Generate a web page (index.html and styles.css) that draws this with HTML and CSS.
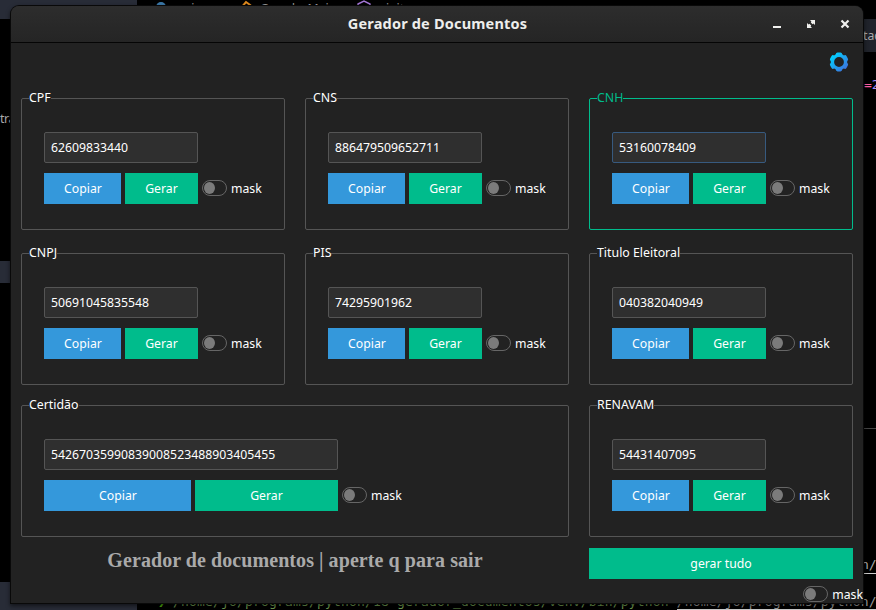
FILE: index.html
```
<!DOCTYPE html>
<html lang="pt-BR">
<head>
<meta charset="utf-8">
<title>Gerador de Documentos</title>
<link rel="stylesheet" href="styles.css">
</head>
<body>
<div class="desktop">
  <div class="panel panel-top"></div>
  <div class="panel panel-left"></div>
  <div class="panel panel-bottom"></div>
  <div class="panel panel-tab"><span>tad</span></div>
  <div class="rule"></div>
  <div class="crumbs">
    <svg width="12" height="12" viewBox="0 0 12 12"><circle cx="6" cy="6" r="5" fill="#3b78a8"/><path d="M6 11V7h5" fill="#d5b03a"/></svg>
    <span class="c1">main.py</span><span class="c2">›</span>
    <svg class="c3" width="14" height="12" viewBox="0 0 14 12"><path d="M2 8l5-6 4 3-5 6z" fill="none" stroke="#e08a1e" stroke-width="2"/></svg>
    <span class="c4">GeradorMain</span><span class="c5">›</span>
    <svg class="c6" width="14" height="12" viewBox="0 0 14 12"><path d="M1 4l6-3 6 3v6H1z" fill="none" stroke="#a476d6" stroke-width="1.4"/></svg>
    <span class="c7">__init__</span>
  </div>
  <span class="bit bit-tra">tra</span>
  <span class="bit bit-eq">=<b>2</b></span>
  <span class="bit bit-path">n/</span>
  <div class="terminal"><span class="prompt">❯</span><span class="cmd">/home/jo/programs/python/18-gerador_documentos/venv/bin/python</span><span class="arg">/home/jo/programs/python/</span></div>
</div>

<main class="window">
  <header class="titlebar">
    <h1>Gerador de Documentos</h1>
    <div class="controls">
      <svg width="10" height="10" viewBox="0 0 10 10"><path d="M1 7h8v2H1z"/></svg>
      <svg width="10" height="10" viewBox="0 0 10 10"><path d="M4 1h5v5L7.4 4.6 6.6 5.2 4.8 3.4 5.4 2.6zM1 4l1.6 1.4.8-.6 1.8 1.8-.6.8L6 9H1z"/></svg>
      <svg width="10" height="10" viewBox="0 0 10 10"><path d="M1.5 1.5l7 7M8.5 1.5l-7 7" stroke="#f0f0ee" stroke-width="2.2"/></svg>
    </div>
  </header>
  <div class="toolbar">
    <svg width="20" height="20" viewBox="0 0 20 20">
      <defs><linearGradient id="gear" gradientUnits="userSpaceOnUse" x1="2" y1="2" x2="18" y2="18"><stop offset=".1" stop-color="#00d0ff"/><stop offset=".9" stop-color="#3b78e0"/></linearGradient></defs>
      <g fill="none" stroke="url(#gear)">
        <circle cx="10" cy="10" r="6.6" stroke-width="3.4"/>
        <path stroke-width="3.6" stroke-linecap="round" stroke-linejoin="round" d="M8.6 2.4h2.8M8.6 17.6h2.8M2.7 7.4l1.4-2.4M15.9 15l1.4-2.4M2.7 12.6l1.4 2.4M15.9 5l1.4 2.4"/>
      </g>
    </svg>
  </div>
  <div class="grid">
    <section class="card"><h2>CPF</h2><div class="value">62609833440</div><div class="row"><button class="copy">Copiar</button><button class="make">Gerar</button><label class="mask"><i></i>mask</label></div></section>
    <section class="card"><h2>CNS</h2><div class="value">886479509652711</div><div class="row"><button class="copy">Copiar</button><button class="make">Gerar</button><label class="mask"><i></i>mask</label></div></section>
    <section class="card active"><h2>CNH</h2><div class="value">53160078409</div><div class="row"><button class="copy">Copiar</button><button class="make">Gerar</button><label class="mask"><i></i>mask</label></div></section>
    <section class="card"><h2>CNPJ</h2><div class="value">50691045835548</div><div class="row"><button class="copy">Copiar</button><button class="make">Gerar</button><label class="mask"><i></i>mask</label></div></section>
    <section class="card"><h2>PIS</h2><div class="value">74295901962</div><div class="row"><button class="copy">Copiar</button><button class="make">Gerar</button><label class="mask"><i></i>mask</label></div></section>
    <section class="card"><h2>Titulo Eleitoral</h2><div class="value">040382040949</div><div class="row"><button class="copy">Copiar</button><button class="make">Gerar</button><label class="mask"><i></i>mask</label></div></section>
    <section class="card wide"><h2>Certidão</h2><div class="value">54267035990839008523488903405455</div><div class="row"><button class="copy">Copiar</button><button class="make">Gerar</button><label class="mask"><i></i>mask</label></div></section>
    <section class="card"><h2>RENAVAM</h2><div class="value">54431407095</div><div class="row"><button class="copy">Copiar</button><button class="make">Gerar</button><label class="mask"><i></i>mask</label></div></section>
  </div>
  <footer class="footer">
    <p>Gerador de documentos | aperte q para sair</p>
    <div class="all">
      <button class="make">gerar tudo</button>
      <label class="mask"><i></i>mask</label>
    </div>
  </footer>
</main>
</body>
</html>
```
FILE: styles.css
```
* { box-sizing: border-box; }
body {
  margin: 0;
  width: 876px;
  height: 610px;
  padding: 6px 0 0 11px;
  overflow: hidden;
  background: #000;
  color: #fff;
  font: 12.25px/17px "Noto Sans", sans-serif;
}

/* Editor and terminal visible behind the window */
.desktop { position: absolute; inset: 0; overflow: hidden; }
.desktop .panel, .rule, .bit, .terminal, .crumbs, .crumbs > * { position: absolute; white-space: pre; }
.panel { background: #282c37; }
.panel-top { left: 0; top: 0; width: 137px; height: 19px; }
.panel-left { left: 0; top: 261px; width: 11px; height: 22px; }
.panel-bottom { left: 0; top: 582px; width: 137px; height: 28px; }
.panel-tab { left: 863px; top: 19px; width: 13px; height: 33px; background: #20232b; color: #aaa; line-height: 33px; }
.rule { left: 863px; top: 428px; width: 13px; height: 1px; background: #444; }
.crumbs { left: 155px; top: 0; color: #999; line-height: 17px; height: 8px; }
.crumbs > svg { top: 1px; left: 0; }
.crumbs > span { top: 0; }
.crumbs .c1 { left: 18px; }
.crumbs .c2 { left: 75px; }
.crumbs .c3 { left: 84px; top: 0; }
.crumbs .c4 { left: 105px; }
.crumbs .c5 { left: 189px; }
.crumbs .c6 { left: 202px; top: 0; }
.crumbs .c7 { left: 220px; }
.bit-tra { left: 0; top: 110px; color: #aaa; letter-spacing: -0.4px; }
.bit-eq { left: 864px; top: 76px; color: #ff5fa8; font: 13px/17px "DejaVu Sans Mono", monospace; }
.bit-eq b { color: #a58bff; font-weight: normal; }
.bit-path { left: 861px; top: 557px; color: #aaa; font: 13px/16px "DejaVu Sans Mono", monospace; border-bottom: 1px solid #ccc; }
.terminal { left: 158px; top: 594px; font: 13px/16px "DejaVu Sans Mono", monospace; letter-spacing: 0.17px; color: #6f9a50; }
.prompt { color: #4caf0c; margin-right: 7px; }
.arg { margin-left: 8px; color: #999; border-bottom: 1px solid #ccc; }

.window {
  position: relative;
  width: 852px;
  height: 597px;
  background: #222;
  border-radius: 8px 8px 0 0;
  box-shadow: 0 0 0 1px #090909, 0 2px 4px 1px rgba(0, 0, 0, .55);
}
.titlebar {
  height: 37px;
  display: grid;
  grid-template-columns: 1fr auto 1fr;
  align-items: center;
  border-bottom: 1px solid #050505;
  border-radius: 8px 8px 0 0;
  background: linear-gradient(#2d2d2d, #252525);
}
h1 { grid-column: 2; margin: 0 0 2px 1px; font-size: 14.5px; line-height: 20px; color: #eeeeec; letter-spacing: 0.19px; }
.controls { display: flex; justify-content: flex-end; gap: 24px; padding-right: 13px; fill: #f0f0ee; }
.toolbar { height: 55px; padding: 9px 14.5px 0 0; display: flex; justify-content: flex-end; }
.toolbar svg { overflow: visible; }
.grid {
  display: grid;
  grid-template-columns: repeat(3, 264px);
  column-gap: 20px;
  margin: 0 10px;
  grid-template-rows: 155px 152px 132px;
}
.card { height: 132px; border: 1px solid #555; border-radius: 2px; padding: 0 22px; }
.card.wide { grid-column: span 2; }
.card h2 {
  width: max-content;
  height: 17px;
  margin: -10px 0 26px -15px;
  background: #222;
  font-size: 12.35px;
  font-weight: normal;
  line-height: 17px;
}
.value {
  width: 154px;
  height: 31px;
  padding: 0 6px;
  border: 1px solid #555;
  border-radius: 2px;
  background: #2f2f2f;
  line-height: 29px;
}
.row { display: flex; align-items: center; gap: 4px; margin-top: 10px; height: 31px; }
button { height: 31px; border: 0; padding: 0; font: inherit; color: #fff; }
.copy { width: 77px; padding-left: 1px; background: #3498db; }
.make { width: 73px; background: #00bc8c; }
.wide .value { width: 294px; }
.wide .copy { width: 147px; }
.wide .make { width: 143px; }
.mask { display: flex; align-items: center; gap: 4px; height: 17px; }
.mask i { width: 25px; height: 16px; margin-bottom: 2px; border: 1px solid #666; border-radius: 8px; padding: 1px; }
.mask i::before { content: ""; display: block; width: 11px; height: 12px; border-radius: 50%; background: #7b7b7b; }
.active { border-color: #00bc8c; }
.active h2 { color: #00bc8c; }
.active .value { border-color: #375a7f; }

.footer { display: grid; grid-template-columns: 548px 264px; column-gap: 20px; margin: 11px 10px 0; }
.footer p { margin: 0; text-align: center; font: bold 20px/24px "Liberation Serif", serif; letter-spacing: 0.07px; color: #aaa; }
.all { display: flex; flex-direction: column; }
.all .make { width: 264px; }
.all .mask { align-self: flex-end; margin: 7px -10px 0 0; }
```
